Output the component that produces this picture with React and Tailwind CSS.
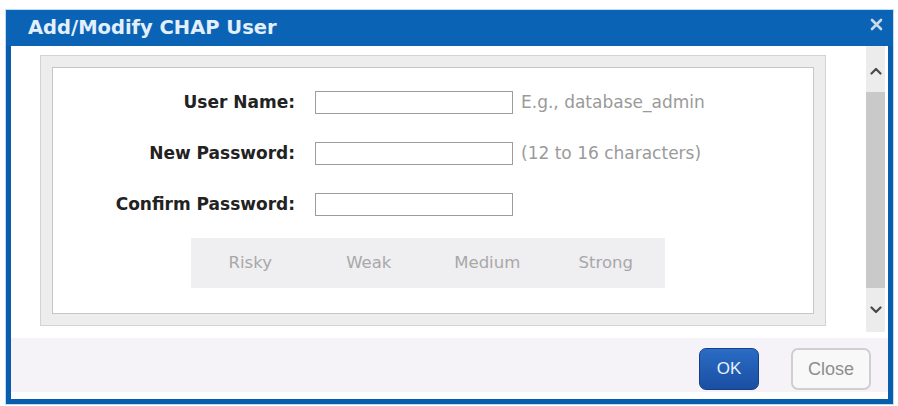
import { useState } from 'react';

const fields = [
  { label: 'User Name:', hint: 'E.g., database_admin' },
  { label: 'New Password:', hint: '(12 to 16 characters)' },
  { label: 'Confirm Password:', hint: '' }
];

const strengths = ['Risky', 'Weak', 'Medium', 'Strong'];

function Chevron({ down }) {
  return (
    <svg width="12" height="8" viewBox="0 0 12 8" className="block">
      <path
        d={down ? 'M1.5 1.5 L6 6 L10.5 1.5' : 'M1.5 6.5 L6 2 L10.5 6.5'}
        fill="none"
        stroke="#4a4a4a"
        strokeWidth="2.2"
        strokeLinecap="round"
        strokeLinejoin="round"
      />
    </svg>
  );
}

function ScrollBar() {
  return (
    <div className="w-[19px] h-[286px] flex flex-col bg-[#ececec]">
      <div className="h-[46px] flex items-center justify-center pt-[4px]">
        <Chevron />
      </div>
      <div className="h-[196px] bg-[#c9c9c9]" />
      <div className="flex-1 flex items-center justify-center">
        <Chevron down />
      </div>
    </div>
  );
}

export default function App() {
  const [values, setValues] = useState(['', '', '']);

  return (
    <div className="w-[898px] h-[406px] bg-white pt-[10px] pl-[6px] font-['DejaVu_Sans',sans-serif]">
      <div className="w-[887px] h-[394px] flex flex-col bg-[#0a5cad] shadow-[0_0_0_1px_#b9def5]">
        {/* Title bar */}
        <div className="h-[36px] flex items-center justify-between pl-[22px] pr-[10px] bg-[#0b63b6]">
          <h1 className="text-[19.5px] font-bold text-[#e2f0fb] leading-none">Add/Modify CHAP User</h1>
          <svg width="13" height="13" viewBox="0 0 13 13" className="mb-[8px]">
            <path d="M2 2 L11 11 M11 2 L2 11" stroke="#c9dbea" strokeWidth="2.6" strokeLinecap="round" />
          </svg>
        </div>

        <div className="flex-1 px-[5px] pb-[5px]">
          <div className="h-full bg-white flex flex-col">
            {/* Scrollable content */}
            <div className="h-[292px] flex">
              <div className="flex-1 pl-[29px] pt-[9px]">
                <div className="w-[786px] h-[271px] border border-[#d3d3d3] bg-[#ededed] p-[11px]">
                  <div className="h-full border border-[#c6c6c6] bg-white pt-[23px]">
                    <div className="flex flex-col gap-[28px]">
                      {fields.map((f, i) => (
                        <div key={f.label} className="flex items-center h-[23px]">
                          <label className="w-[242px] text-right text-[17px] font-bold text-[#222]">{f.label}</label>
                          <input
                            type={i === 0 ? 'text' : 'password'}
                            value={values[i]}
                            onChange={(e) => {
                              const next = [...values];
                              next[i] = e.target.value;
                              setValues(next);
                            }}
                            className="ml-[20px] w-[198px] h-[23px] border border-[#9c9c9c] bg-white outline-none"
                          />
                          {f.hint && <span className="ml-[8px] text-[17px] text-[#9a9a9a]">{f.hint}</span>}
                        </div>
                      ))}
                    </div>

                    {/* Password strength meter */}
                    <div className="ml-[138px] mt-[22px] w-[474px] h-[50px] bg-[#efeef1] grid grid-cols-4 items-center">
                      {strengths.map((s) => (
                        <span key={s} className="text-center text-[16.5px] text-[#a8a8a8]">
                          {s}
                        </span>
                      ))}
                    </div>
                  </div>
                </div>
              </div>
              <ScrollBar />
              <div className="w-[3px]" />
            </div>

            {/* Footer */}
            <div className="h-[54px] bg-[#f6f3f8] flex justify-end items-start pt-[10px] pr-[17px] gap-[32px] font-['Liberation_Sans',sans-serif]">
              <button className="w-[60px] h-[42px] rounded-[7px] bg-gradient-to-b from-[#2a6cc4] to-[#1a4fa3] border border-[#163f86] text-[17px] text-[#e8f1fb]">
                OK
              </button>
              <button className="w-[80px] h-[42px] rounded-[7px] bg-[#f8f8f8] border-2 border-[#cfcfcf] text-[18px] text-[#8e8e8e]">
                Close
              </button>
            </div>
          </div>
        </div>
      </div>
    </div>
  );
}
